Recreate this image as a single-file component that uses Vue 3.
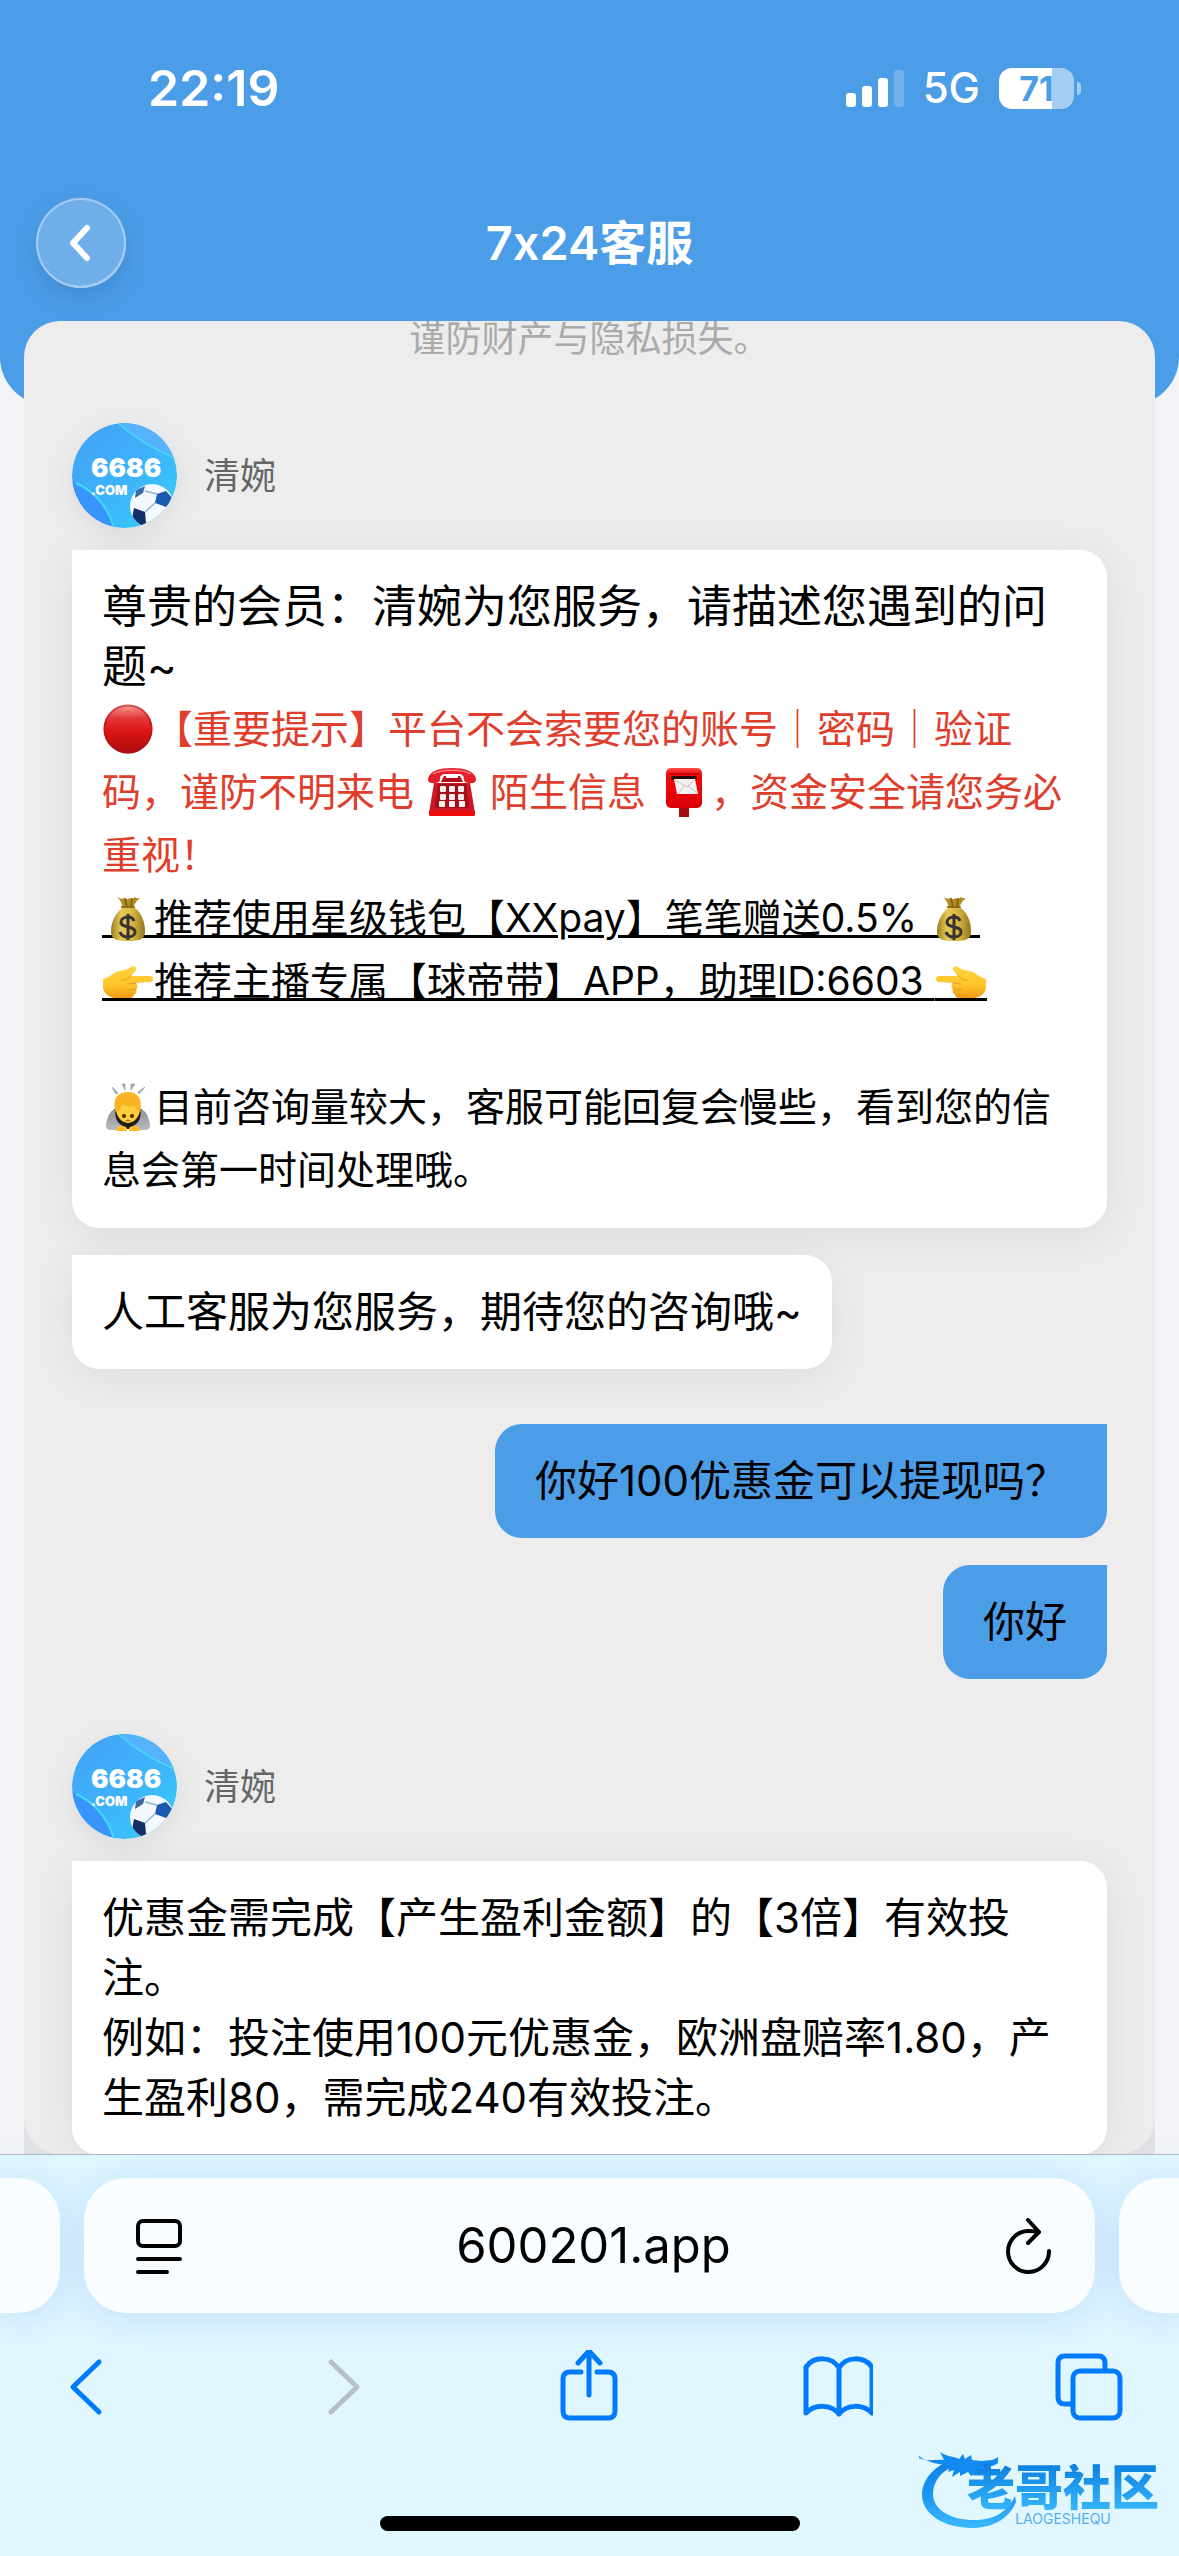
<template>
  <div class="phone">
    <!-- 表情图形定义 -->
    <svg class="sprite" aria-hidden="true">
      <defs>
        <linearGradient id="g-red" x1="0" y1="0" x2="0" y2="1">
          <stop offset="0" stop-color="#ff9d9b" />
          <stop offset="0.28" stop-color="#e2383a" />
          <stop offset="0.55" stop-color="#dd1414" />
          <stop offset="1" stop-color="#a80f10" />
        </linearGradient>
        <linearGradient id="g-post" x1="0" y1="0" x2="0" y2="1">
          <stop offset="0" stop-color="#ff4a4a" />
          <stop offset="0.15" stop-color="#f50a0d" />
          <stop offset="1" stop-color="#d90007" />
        </linearGradient>
        <linearGradient id="g-gold" x1="0" y1="0" x2="1" y2="0">
          <stop offset="0" stop-color="#9a7d1c" />
          <stop offset="0.3" stop-color="#e6ca5a" />
          <stop offset="0.65" stop-color="#d6b440" />
          <stop offset="1" stop-color="#92741a" />
        </linearGradient>
        <linearGradient id="g-hand" x1="0" y1="0" x2="0" y2="1">
          <stop offset="0" stop-color="#ffd23e" />
          <stop offset="0.6" stop-color="#ffc52b" />
          <stop offset="1" stop-color="#ee9a14" />
        </linearGradient>
        <linearGradient id="g-sleeve" x1="0" y1="0" x2="0" y2="1">
          <stop offset="0" stop-color="#8d9094" />
          <stop offset="1" stop-color="#b9bbbe" />
        </linearGradient>
        <linearGradient id="g-logo" x1="0" y1="0" x2="1" y2="1">
          <stop offset="0" stop-color="#45a0f6" />
          <stop offset="0.55" stop-color="#3db4fb" />
          <stop offset="1" stop-color="#36d0fb" />
        </linearGradient>
        <linearGradient id="g-wm" x1="0" y1="0" x2="0" y2="1">
          <stop offset="0" stop-color="#0c82e6" />
          <stop offset="0.5" stop-color="#1a94f2" />
          <stop offset="1" stop-color="#3bb9fb" />
        </linearGradient>
        <clipPath id="c-avatar"><circle cx="52.5" cy="52.5" r="52.5" /></clipPath>
        <clipPath id="c-ball"><circle cx="80" cy="83" r="22" /></clipPath>
      </defs>

      <symbol id="e-dot" viewBox="0 0 52 52">
        <circle cx="26" cy="26" r="24.5" fill="url(#g-red)" />
        <circle cx="26" cy="26" r="23.5" fill="none" stroke="#a31012" stroke-opacity="0.5" stroke-width="2" />
      </symbol>

      <symbol id="e-phone" viewBox="0 0 52 52">
        <path d="M8 17h36l5 30H3z" fill="#cf1624" />
        <path d="M3 45h46v4q0 1-2 1H5q-2 0-2-1z" fill="#ee0a0d" />
        <path d="M15 16l3-6h16l3 6z" fill="#b30d17" />
        <path d="M2 13C3 5 14 2 26 2s23 3 24 11c0 4-2 4-6 4s-6-1-6-4-2-5-5-5H19c-3 0-5 2-5 5s-2 4-6 4-6 0-6-4z" fill="#e3202a" />
        <path d="M7 8C16 3 36 3 45 8" fill="none" stroke="#ff7a78" stroke-width="1.5" />
        <rect x="20" y="8" width="12" height="4" rx="1" fill="#fff" />
        <path d="M12 18h28l3 24H9z" fill="#a50f1b" />
        <g fill="#f1efec">
          <rect x="14" y="20" width="6" height="6" rx="1" /><rect x="23" y="20" width="6" height="6" rx="1" /><rect x="32" y="20" width="6" height="6" rx="1" />
          <rect x="14" y="28" width="6" height="6" rx="1" /><rect x="23" y="28" width="6" height="6" rx="1" /><rect x="32" y="28" width="6" height="6" rx="1" />
          <rect x="13" y="35" width="6" height="6" rx="1" /><rect x="23" y="35" width="6" height="6" rx="1" /><rect x="33" y="35" width="6" height="6" rx="1" />
        </g>
      </symbol>

      <symbol id="e-post" viewBox="0 0 52 52">
        <rect x="21" y="38" width="10" height="13" fill="#a30d12" />
        <rect x="8" y="2" width="36" height="40" rx="5" fill="url(#g-post)" />
        <path d="M11 8h30" stroke="#b80007" stroke-width="1.5" />
        <rect x="13" y="10" width="26" height="4" rx="2" fill="#2b0a0a" />
        <path d="M16 13h21l3 15H19z" fill="#f4f2f0" />
        <path d="M17 14l12 7 7-7M20 28l6-8M39 27l-9-7" fill="none" stroke="#c3bfbb" stroke-width="1" />
      </symbol>

      <symbol id="e-bag" viewBox="0 0 52 52">
        <path d="M15 5q5 3 7 1 3 2 6 0 3 2 5-1 2 2 5 1-6 5-7 11H21q-1-8-6-12z" fill="#b08a24" />
        <path d="M23 6l2 10M30 6l-1 10" stroke="#7d5e12" stroke-width="1.5" />
        <path d="M20 16h13c6 5 10 13 10 23 0 8-4 10-17 10S9 47 9 39c0-10 5-18 11-23z" fill="url(#g-gold)" />
        <path d="M20 15h12" stroke="#8f6d18" stroke-width="2" stroke-linecap="round" />
        <path d="M32 29c-1-3-3-4-6-4-4 0-7 2-7 5 0 7 14 3 14 10 0 3-3 5-7 5s-7-2-8-5M26 22v26" fill="none" stroke="#3b3330" stroke-width="3" />
      </symbol>

      <symbol id="e-hand" viewBox="0 0 52 52">
        <path d="M1 24c5-1 8-4 13-7 5-2 10-1 15-5 3-2 6 0 5 3-1 2-4 4-5 6h19c4 0 4 6 0 6l-14 1c2 2 2 5 0 6 1 3 0 5-2 5 0 3-2 4-5 4H12C7 42 2 39 1 33z" fill="url(#g-hand)" />
        <path d="M20 25c4 0 6-1 9-5M34 28l-8 1M34 34l-8 1M31 39l-6 1" fill="none" stroke="#e39a20" stroke-width="1" stroke-linecap="round" />
      </symbol>

      <symbol id="e-bow" viewBox="0 0 52 52">
        <path d="M10 6l6 6-2 1zM20 3h3v6zM29 3h4l-4 6zM43 6l-6 7-1-2z" fill="#a9adb1" stroke="#a9adb1" />
        <path d="M12 28h28l3 20H9z" fill="#231b18" />
        <path d="M14 28C8 29 5 36 4 44c0 4 2 5 6 5h5l6-4C15 42 12 36 14 28zM38 28c6 1 9 8 10 16 0 4-2 5-6 5h-5l-6-4c6-3 9-9 7-17z" fill="url(#g-sleeve)" />
        <ellipse cx="26" cy="27" rx="12" ry="15" fill="#ffce3d" />
        <path d="M14 31C9 17 17 11 26 11c10 0 15 7 12 20-3-1-4-4-5-6-6 1-10 0-13-1-1 4-3 6-6 7z" fill="#fbb524" />
        <circle cx="22" cy="35" r="2" fill="#4a2d10" /><circle cx="30" cy="35" r="2" fill="#4a2d10" />
        <path d="M24 40q2-2 4 0" fill="none" stroke="#7a4a12" stroke-width="1" />
        <path d="M14 48c3-4 7-4 11-1v3H14zM27 47c4-3 8-3 11 1v2H27z" fill="#ffbb2e" />
      </symbol>

      <symbol id="e-avatar" viewBox="0 0 105 105">
        <g clip-path="url(#c-avatar)">
          <rect width="105" height="105" fill="url(#g-logo)" />
          <path d="M0 58C20 66 36 82 42 105H0z" fill="#3995fc" />
          <path d="M4 60C22 68 36 84 42 105" fill="none" stroke="#3fdcf8" stroke-width="2" />
          <path d="M46 0C62 14 80 26 105 36V0z" fill="#55b2fb" />
          <path d="M46 0C62 14 80 26 105 36" fill="none" stroke="#46dcf2" stroke-width="1.5" />
          <circle cx="80" cy="83" r="22" fill="#f3f9fe" />
          <g clip-path="url(#c-ball)">
            <path d="M85 71l9-3 7 8-4 9-14-5z" fill="#1b58b0" />
            <path d="M62 85l11 4 1 11-6 4-8-8z" fill="#142f68" />
            <path d="M64 67l9-4-2 7-8 5z" fill="#3b6aa5" />
            <path d="M83 80l-10 9M73 68l12 3M97 85l4 6M74 100l13-2" stroke="#8fb4d6" stroke-width="1.5" />
            <path d="M84 96l12-6 6 8-12 8z" fill="#bfe0f8" />
          </g>
        </g>
      </symbol>
    </svg>

    <header class="header">
      <div class="status-bar">
        <span class="time">22:19</span>
        <div class="status-right">
          <svg class="signal" viewBox="0 0 58 37" aria-hidden="true">
            <rect x="0" y="23" width="10" height="14" rx="3" fill="#fff" />
            <rect x="16" y="16" width="10" height="21" rx="3" fill="#fff" />
            <rect x="32" y="8" width="10" height="29" rx="3" fill="#fff" />
            <rect x="48" y="0" width="10" height="37" rx="3" fill="#fff" fill-opacity="0.22" />
          </svg>
          <span class="network">5G</span>
          <div class="battery">
            <span class="battery-body">71</span>
            <span class="battery-tip"></span>
          </div>
        </div>
      </div>
      <div class="title-bar">
        <button class="back-btn" type="button" aria-label="返回">
          <svg viewBox="0 0 90 90" aria-hidden="true">
            <path d="M51 30L37 45l14 15" fill="none" stroke="#fff" stroke-width="6" stroke-linecap="round" stroke-linejoin="round" />
          </svg>
        </button>
        <h1>7x24客服</h1>
      </div>
    </header>

    <main class="chat">
      <div class="panel">
        <p class="notice">谨防财产与隐私损失。</p>

        <section class="group">
          <div class="agent">
            <svg class="avatar" viewBox="0 0 105 105" role="img" aria-label="客服头像">
              <use href="#e-avatar" />
              <text x="19" y="54" class="logo-num">6686</text>
              <text x="19" y="72" class="logo-com">.COM</text>
            </svg>
            <span>{{ agentName }}</span>
          </div>
          <div class="bubble wide">
            <p class="lead">尊贵的会员：清婉为您服务，请描述您遇到的问题~</p>
            <p class="tip red"><svg class="emoji"><use href="#e-dot" /></svg>【重要提示】平台不会索要您的账号｜密码｜验证码，谨防不明来电 <svg class="emoji spaced"><use href="#e-phone" /></svg> 陌生信息 <svg class="emoji spaced"><use href="#e-post" /></svg>，资金安全请您务必重视！</p>
            <p class="tip underline"><svg class="emoji"><use href="#e-bag" /></svg>推荐使用星级钱包【XXpay】笔笔赠送0.5% <svg class="emoji"><use href="#e-bag" /></svg></p>
            <p class="tip underline"><svg class="emoji"><use href="#e-hand" /></svg>推荐主播专属【球帝带】APP，助理ID:6603 <svg class="emoji"><use href="#e-hand" transform="translate(52 0) scale(-1 1)" /></svg></p>
            <p class="tip"><br></p>
            <p class="tip"><svg class="emoji"><use href="#e-bow" /></svg>目前咨询量较大，客服可能回复会慢些，看到您的信息会第一时间处理哦。</p>
          </div>
          <div class="bubble">人工客服为您服务，期待您的咨询哦~</div>
        </section>

        <section class="group mine">
          <div v-for="msg in myMessages" :key="msg" class="bubble">{{ msg }}</div>
        </section>

        <section class="group">
          <div class="agent">
            <svg class="avatar" viewBox="0 0 105 105" role="img" aria-label="客服头像">
              <use href="#e-avatar" />
              <text x="19" y="54" class="logo-num">6686</text>
              <text x="19" y="72" class="logo-com">.COM</text>
            </svg>
            <span>{{ agentName }}</span>
          </div>
          <div class="bubble wide">
            <p v-for="line in reply" :key="line">{{ line }}</p>
          </div>
        </section>
      </div>
    </main>

    <footer class="browser">
      <div class="tabs">
        <div class="tab side left"></div>
        <div class="tab current">
          <button type="button" aria-label="页面菜单">
            <svg width="46" height="56" viewBox="0 0 46 56" fill="none" stroke="#000" stroke-width="4" stroke-linecap="round">
              <rect x="2" y="3" width="42" height="25" rx="5" />
              <path d="M2 41h42M2 54h29" />
            </svg>
          </button>
          <input v-model="address" type="text" aria-label="地址" readonly>
          <button type="button" aria-label="刷新">
            <svg width="46" height="56" viewBox="0 0 46 56" fill="none" stroke="#000" stroke-width="4" stroke-linecap="round" stroke-linejoin="round">
              <path d="M44 33A20.500 20.500 0 1 1 23.500 13q5 0 10 1" />
              <path d="M23 2l11 12-11 11" />
            </svg>
          </button>
        </div>
        <div class="tab side right"></div>
      </div>

      <nav class="toolbar">
        <button type="button" aria-label="后退">
          <svg viewBox="0 0 72 72"><path d="M50 12L24 37l26 25" /></svg>
        </button>
        <button type="button" aria-label="前进" disabled>
          <svg viewBox="0 0 72 72"><path d="M31 12l26 25-26 25" /></svg>
        </button>
        <button type="button" aria-label="分享">
          <svg viewBox="0 0 72 72">
            <path d="M30 22H19q-7 0-7 7v32q0 7 7 7h38q7 0 7-7V29q0-7-7-7H46M38 45V2M27 13L38 1l11 12" />
          </svg>
        </button>
        <button type="button" aria-label="书签">
          <svg viewBox="0 0 72 72">
            <path d="M38 18C31 6 13 6 5 17v46c9-9 25-9 33 1 8-10 24-10 33-1V17C63 6 45 6 38 18zM38 18v46" />
          </svg>
        </button>
        <button type="button" aria-label="标签页">
          <svg viewBox="0 0 72 72">
            <rect x="21" y="21" width="47" height="47" rx="7" />
            <path d="M19 54h-6q-7 0-7-7V13q0-7 7-7h33q7 0 7 7v6" />
          </svg>
        </button>
      </nav>

      <div class="home-indicator"></div>

      <div class="watermark">
        <svg viewBox="0 0 100 86" aria-hidden="true">
          <path d="M31 16C13 24 3 37 3 51c0 19 22 33 50 33 20 0 37-9 44-26l-1-6c-8 17-22 24-41 24C32 76 14 66 14 50c0-12 7-22 21-28z" fill="url(#g-wm)" />
          <path d="M0 14c9 4 16 1 25 2l-4-8c7 5 13 4 19 7l4-5 2 5 6-4 1 5 10 1c6-1 11 0 16-4v6c-5 4-11 4-16 4l13 3c-2 4-6 5-10 4l-7-2-7 4-3-4-8 4v-4l-8 5 2-7-6 2 2-7c-8 0-22-2-31-9z" fill="#128af0" />
        </svg>
        <div class="watermark-text">
          <strong>老哥社区</strong>
          <span>LAOGESHEQU</span>
        </div>
      </div>
    </footer>
  </div>
</template>

<script setup>
import { ref } from 'vue';

const agentName = '清婉';
const address = ref('600201.app');

const myMessages = ref(['你好100优惠金可以提现吗？', '你好']);

const reply = [
  '优惠金需完成【产生盈利金额】的【3倍】有效投注。',
  '例如：投注使用100元优惠金，欧洲盘赔率1.80，产生盈利80，需完成240有效投注。'
];
</script>

<style>
body {
  margin: 0;
  background: #f2f4f7;
}
</style>

<style scoped>
.phone {
  display: flex;
  flex-direction: column;
  height: 100vh;
  overflow: hidden;
  background: #f2f4f7;
  color: #000;
  font-family: Inter, "Noto Sans CJK SC", sans-serif;
  font-size: 42px;
  line-height: 60px;
  text-spacing-trim: space-all;
}

p,
h1 {
  margin: 0;
}

button {
  padding: 0;
  border: none;
  background: none;
  cursor: pointer;
}

button svg {
  display: block;
}

.sprite {
  position: absolute;
  width: 0;
  height: 0;
}

/* 顶部 */
.header {
  flex: none;
  box-sizing: border-box;
  height: 405px;
  background: #4c9de8;
  border-radius: 0 0 48px 48px;
  color: #fff;
}

.status-bar {
  display: flex;
  justify-content: space-between;
  align-items: center;
  height: 176px;
  padding: 0 98px 0 148px;
}

.time {
  font-size: 50px;
  font-weight: 600;
}

.status-right {
  display: flex;
  align-items: center;
}

.signal {
  width: 58px;
  height: 37px;
}

.network {
  margin: 0 19px;
  font-size: 42px;
  font-weight: 500;
}

.battery {
  display: flex;
  align-items: center;
  gap: 3px;
}

.battery-body {
  width: 75px;
  height: 41px;
  border-radius: 13px;
  background: linear-gradient(90deg, #fff 71%, #a6cef4 71%);
  color: #4c9de8;
  font-size: 34px;
  font-weight: 700;
  line-height: 41px;
  text-align: center;
}

.battery-tip {
  width: 4px;
  height: 13px;
  border-radius: 0 4px 4px 0;
  background: #a6cef4;
}

.title-bar {
  display: grid;
  grid-template-columns: 90px 1fr 90px;
  align-items: center;
  height: 134px;
  padding: 0 36px;
}

.back-btn {
  box-sizing: border-box;
  width: 90px;
  height: 90px;
  border-radius: 50%;
  background: #70aeea;
  box-shadow: inset 0 0 0 2px #a3caf1, inset -1px -2px 1px #c5def6, 0 10px 24px rgba(30, 80, 140, 0.22);
}

h1 {
  font-size: 47px;
  font-weight: 600;
  font-feature-settings: "calt" 0;
  text-align: center;
}

/* 聊天区 */
.chat {
  position: relative;
  flex: 1;
  display: flex;
  min-height: 0;
  margin: -84px 24px 0;
  background: linear-gradient(to top, #dfe1e3 36px, transparent 36px);
}

.panel {
  flex: 1;
  min-width: 0;
  padding: 0 48px;
  overflow: hidden;
  background: #ededed;
  border-radius: 36px;
}

.notice {
  margin: -12px 0 54px;
  color: #aaa;
  font-size: 36px;
  text-align: center;
}

.group {
  display: flex;
  flex-direction: column;
  align-items: flex-start;
  gap: 27px;
  margin-bottom: 55px;
}

.mine {
  align-items: flex-end;
}

.agent {
  display: flex;
  align-items: center;
  gap: 27px;
  margin-bottom: -5px;
  color: #666;
  font-size: 36px;
}

.avatar {
  width: 105px;
  height: 105px;
  border-radius: 50%;
  box-shadow: 0 8px 30px rgba(0, 0, 0, 0.08);
}

.logo-num {
  fill: #fff;
  font-family: Inter, sans-serif;
  font-size: 26px;
  font-weight: 900;
}

.logo-com {
  fill: #fff;
  font-family: Inter, sans-serif;
  font-size: 13px;
  font-weight: 900;
}

.bubble {
  box-sizing: border-box;
  padding: 27px 30px;
  border-radius: 0 27px 27px 27px;
  background: #fff;
  box-shadow: 0 8px 40px rgba(0, 0, 0, 0.07);
}

.bubble.wide {
  width: 100%;
}

.mine .bubble {
  padding: 27px 40px;
  border-radius: 27px 0 27px 27px;
  background: #4c9de8;
  box-shadow: none;
}

.lead {
  font-size: 45px;
}

.tip {
  font-size: 39px;
  line-height: 63px;
}

.red {
  color: #e03e2d;
}

.underline {
  text-decoration: underline;
  text-decoration-thickness: 3px;
  text-underline-offset: 3px;
}

.emoji {
  width: 52px;
  height: 52px;
  vertical-align: -12px;
}

.spaced {
  margin: 0 1px;
}

/* 表情下方补齐下划线 */
.underline .emoji {
  background: linear-gradient(#000, #000) 0 43px / 100% 3px no-repeat;
}

/* 浏览器底栏 */
.browser {
  position: relative;
  flex: none;
  box-sizing: border-box;
  height: 402px;
  border-top: 1px solid #a9b8c4;
  background: #e1f7ff;
}

.tabs {
  display: flex;
  gap: 24px;
  padding-top: 23px;
}

.tab {
  height: 135px;
  border-radius: 42px;
  background: #fafdff;
  box-shadow: 0 4px 40px rgba(130, 175, 240, 0.35);
}

.side {
  width: 60px;
}

.left {
  border-radius: 0 42px 42px 0;
}

.right {
  border-radius: 42px 0 0 42px;
}

.current {
  flex: 1;
  display: flex;
  align-items: center;
  min-width: 0;
  padding: 0 44px 0 52px;
  box-sizing: border-box;
}

.current input {
  flex: 1;
  min-width: 0;
  border: none;
  outline: none;
  background: none;
  color: #000;
  font-family: inherit;
  font-size: 49px;
  text-align: center;
}

.toolbar {
  display: flex;
  justify-content: space-between;
  padding: 37px 55px 0 49px;
}

.toolbar svg {
  width: 72px;
  height: 72px;
  fill: none;
  stroke: #007aff;
  stroke-width: 5;
  stroke-linecap: round;
  stroke-linejoin: round;
}

.toolbar button:disabled svg {
  stroke: #b5c0cc;
}

.home-indicator {
  width: 420px;
  height: 15px;
  margin: 94px auto 0;
  border-radius: 8px;
  background: #000;
}

/* 右下角水印 */
.watermark {
  position: absolute;
  right: 20px;
  bottom: 26px;
  display: flex;
}

.watermark svg {
  width: 100px;
  height: 86px;
}

.watermark-text {
  display: flex;
  flex-direction: column;
  align-items: center;
  margin: 20px 0 0 -52px;
}

.watermark-text strong {
  background: linear-gradient(#0c7fe0, #38b8fc);
  background-clip: text;
  color: transparent;
  font-size: 48px;
  font-weight: 900;
  line-height: 48px;
}

.watermark-text span {
  color: #55aef0;
  font-size: 14px;
  line-height: 14px;
}
</style>
